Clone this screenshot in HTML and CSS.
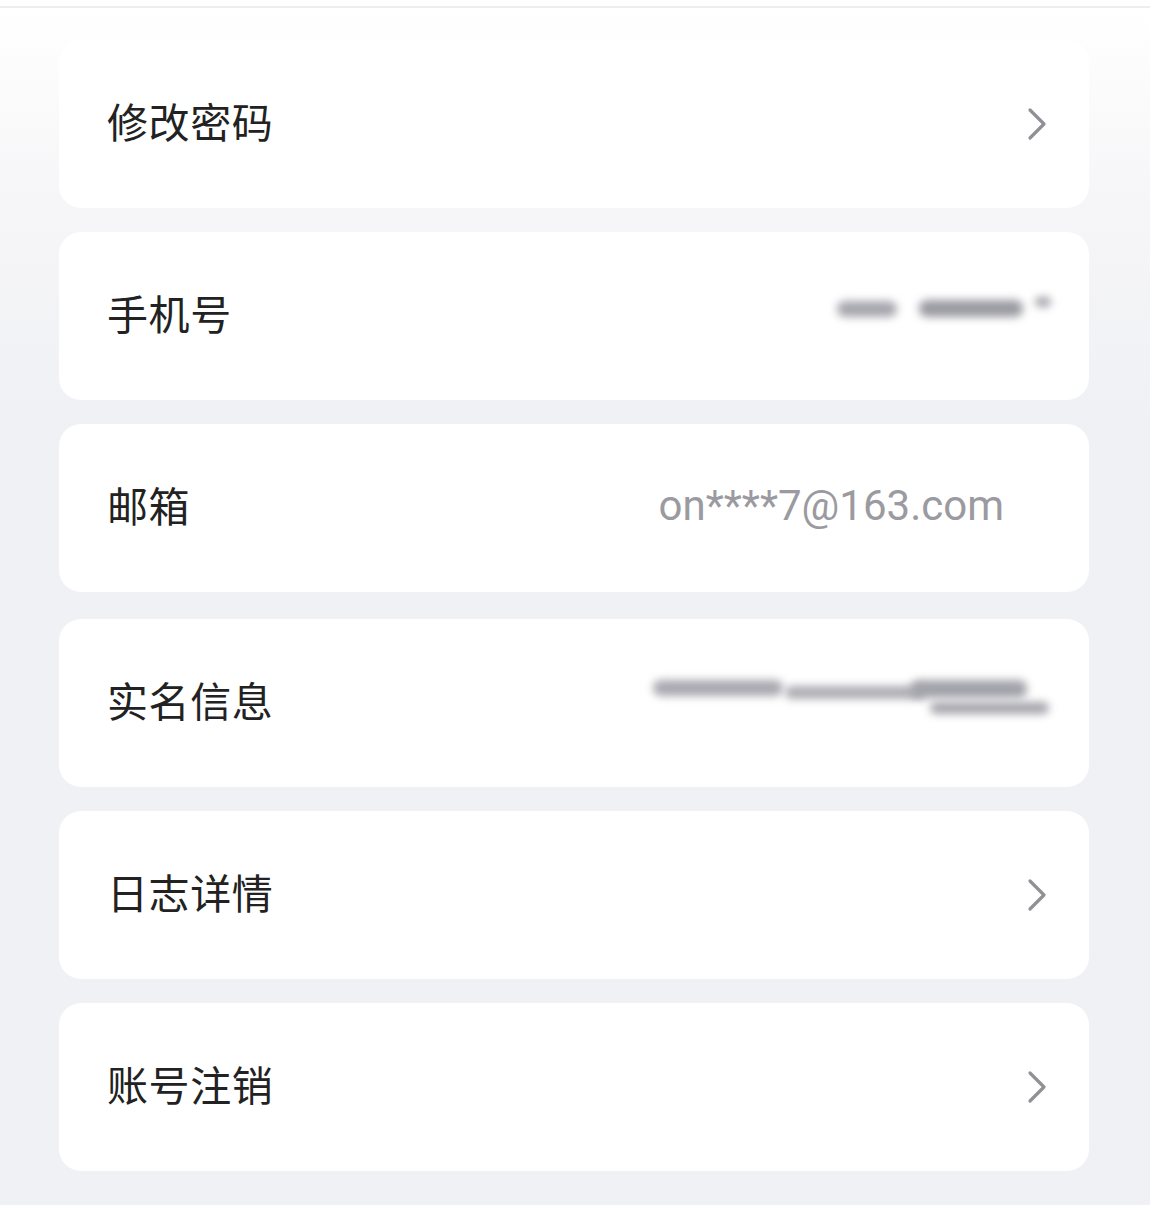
FILE: index.html
```html
<!DOCTYPE html>
<html lang="zh-CN">
<head>
    <meta charset="UTF-8">
    <meta name="viewport" content="width=device-width, initial-scale=1.0">
    <title>账号安全</title>
    <link rel="stylesheet" href="styles.css">
</head>
<body>

<div class="topbar"></div>

<div class="list">
    <div class="item">
        <span class="label">修改密码</span>
        <svg class="arrow" viewBox="0 0 20 34"><path d="M3 3 L17 17 L3 31" /></svg>
    </div>
    <div class="item">
        <span class="label">手机号</span>
        <span class="masked phone">
            <i class="b1"></i><i class="b2"></i><i class="b3"></i>
        </span>
    </div>
    <div class="item">
        <span class="label">邮箱</span>
        <span class="value">on****7@163.com</span>
    </div>
    <div class="item item-gap">
        <span class="label">实名信息</span>
        <span class="masked name">
            <i class="n1"></i><i class="n2"></i><i class="n3"></i><i class="n4"></i>
        </span>
    </div>
    <div class="item">
        <span class="label">日志详情</span>
        <svg class="arrow" viewBox="0 0 20 34"><path d="M3 3 L17 17 L3 31" /></svg>
    </div>
    <div class="item">
        <span class="label">账号注销</span>
        <svg class="arrow" viewBox="0 0 20 34"><path d="M3 3 L17 17 L3 31" /></svg>
    </div>
</div>

</body>
</html>
```

FILE: styles.css
```css
* { margin: 0; padding: 0; box-sizing: border-box; }
html, body { height: 100%; }
body {
    font-family: "Noto Sans CJK SC", "Noto Sans", sans-serif;
    background: linear-gradient(to bottom, #ffffff 0px, #ffffff 10px, #f6f6f8 200px, #f0f1f5 420px, #f0f1f5 100%);
    color: #222;
}
.topbar { height: 8px; border-bottom: 2px solid #eeeef2; background: #fff; }
.list { padding: 32px 61px 0 59px; display: flex; flex-direction: column; gap: 24px; }
.item {
    height: 168px; background: #fff; border-radius: 22px;
    display: flex; align-items: center; justify-content: space-between;
    padding: 0 42px 0 48px;
}
.item-gap { margin-top: 3px; }
.label { font-size: 41px; line-height: 1; color: #222; letter-spacing: 0.6px; margin-top: -8px; }
.arrow { width: 20px; height: 34px; }
.arrow path { fill: none; stroke: #909096; stroke-width: 3.2; stroke-linecap: round; stroke-linejoin: round; }
.value {
    font-family: Roboto, "Liberation Sans", sans-serif; font-size: 42px; color: #9a9aa0;
    margin-right: 43px; margin-top: -6px;
}
.masked { position: relative; display: block; }
.masked i { position: absolute; display: block; background: #9a9aa2; filter: blur(4px); border-radius: 8px; }
.phone { width: 222px; height: 30px; margin-right: -2px; margin-top: -12px; }
.phone .b1 { left: 10px; top: 6px; width: 60px; height: 16px; background: #a6a6ae; }
.phone .b2 { left: 92px; top: 5px; width: 104px; height: 17px; background: #9a9aa2; }
.phone .b3 { left: 208px; top: 2px; width: 16px; height: 10px; background: #a2a2aa; }
.name { width: 404px; height: 44px; margin-right: -2px; margin-top: -6px; }
.name .n1 { left: 8px; top: 2px; width: 130px; height: 16px; background: #a8a8b0; }
.name .n2 { left: 140px; top: 8px; width: 140px; height: 13px; background: #acacb2; }
.name .n3 { left: 266px; top: 2px; width: 116px; height: 18px; background: #a2a2aa; }
.name .n4 { left: 285px; top: 24px; width: 119px; height: 12px; background: #a4a4ac; }
```
